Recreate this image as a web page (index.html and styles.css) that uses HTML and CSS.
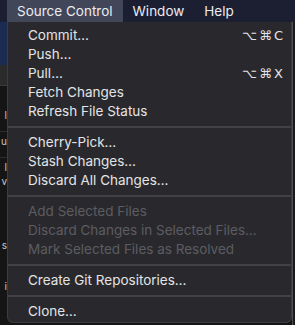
FILE: index.html
```html
<!DOCTYPE html>
<html lang="en">

<head>
  <meta charset="UTF-8">
  <meta name="viewport" content="width=device-width, initial-scale=1.0">
  <title>Source Control Menu</title>
  <link rel="stylesheet" href="styles.css">
</head>

<body>
  <div class="menubar">
    <span class="menubar-item active">Source Control</span>
    <span class="menubar-item">Window</span>
    <span class="menubar-item">Help</span>
  </div>

  <div class="stage">
    <!-- window behind the menu, left edge -->
    <div class="behind-left">
      <div class="tile tile-blue"></div>
      <div class="tile tile-grey"></div>
      <div class="peek">
        <span class="peek-text" style="margin-top: 22px;">l</span>
        <span class="peek-text rule" style="margin-top: 9px;">u</span>
        <span class="peek-text rule" style="margin-top: 9px;">l</span>
        <span class="peek-text">v</span>
        <span class="peek-text" style="margin-top: 50px;">s</span>
        <span class="peek-text" style="margin-top: 27px;">i</span>
      </div>
    </div>

    <div class="menu">
      <div class="menu-item"><span>Commit…</span><span class="shortcut">⌥⌘C</span></div>
      <div class="menu-item"><span>Push…</span></div>
      <div class="menu-item"><span>Pull…</span><span class="shortcut">⌥⌘X</span></div>
      <div class="menu-item"><span>Fetch Changes</span></div>
      <div class="menu-item"><span>Refresh File Status</span></div>
      <div class="separator"></div>
      <div class="menu-item"><span>Cherry-Pick…</span></div>
      <div class="menu-item"><span>Stash Changes…</span></div>
      <div class="menu-item"><span>Discard All Changes…</span></div>
      <div class="separator"></div>
      <div class="menu-item disabled"><span>Add Selected Files</span></div>
      <div class="menu-item disabled"><span>Discard Changes in Selected Files…</span></div>
      <div class="menu-item disabled"><span>Mark Selected Files as Resolved</span></div>
      <div class="separator"></div>
      <div class="menu-item"><span>Create Git Repositories…</span></div>
      <div class="separator"></div>
      <div class="menu-item"><span>Clone…</span></div>
    </div>

    <div class="behind-right"></div>
  </div>
</body>

</html>
```

FILE: styles.css
```css
* {
  margin: 0;
  padding: 0;
  box-sizing: border-box;
}

body {
  font-family: Inter, 'Noto Sans', 'Liberation Sans', sans-serif;
  font-size: 13.5px;
  background: #141414;
  width: 295px;
  height: 325px;
  overflow: hidden;
}

.menubar {
  display: flex;
  height: 22px;
  padding-left: 7px;
  background: #1c1e32;
  color: #ececf0;
}

.menubar-item {
  padding: 0 10px;
  line-height: 22px;
}

.menubar-item.active {
  background: #414659;
}

.stage {
  display: flex;
  height: 303px;
}

.behind-left {
  width: 7px;
  display: flex;
  flex-direction: column;
  overflow: hidden;
}

.tile-blue {
  height: 43px;
  background: #1b2b52;
}

.tile-grey {
  height: 21px;
  background: #2b2b2c;
  border-bottom: 1px solid #3a3a3a;
}

.peek {
  flex: 1;
  display: flex;
  flex-direction: column;
  align-items: flex-end;
  background: #151515;
  color: #c8c8c8;
  font-size: 10px;
  line-height: 14px;
}

.peek-text {
  white-space: nowrap;
}

.peek-text.rule {
  width: 100%;
  text-align: right;
  border-top: 1px solid #2e2e2e;
  padding-top: 2px;
}

.menu {
  width: 285px;
  height: 301px;
  padding: 4px 0 2px;
  background: #29292d;
  border-left: 1px solid #3b3b40;
  border-right: 1px solid #3b3b40;
  border-bottom: 1px solid #3b3b40;
  border-radius: 0 0 6px 6px;
  color: #e4e4e6;
}

.menu-item {
  display: flex;
  justify-content: space-between;
  height: 19px;
  line-height: 19px;
  padding: 0 8px 0 20px;
  white-space: nowrap;
}

.menu-item.disabled {
  color: #5c5c61;
}

.shortcut {
  font-family: 'DejaVu Sans', Inter, sans-serif;
  font-size: 13px;
  letter-spacing: 2px;
  margin-right: -2px;
}

.separator {
  height: 2px;
  margin: 5px 0;
  background: #424246;
}

.behind-right {
  flex: 1;
  background: #1a1a1b;
  border-left: 1px solid #505052;
}
```
